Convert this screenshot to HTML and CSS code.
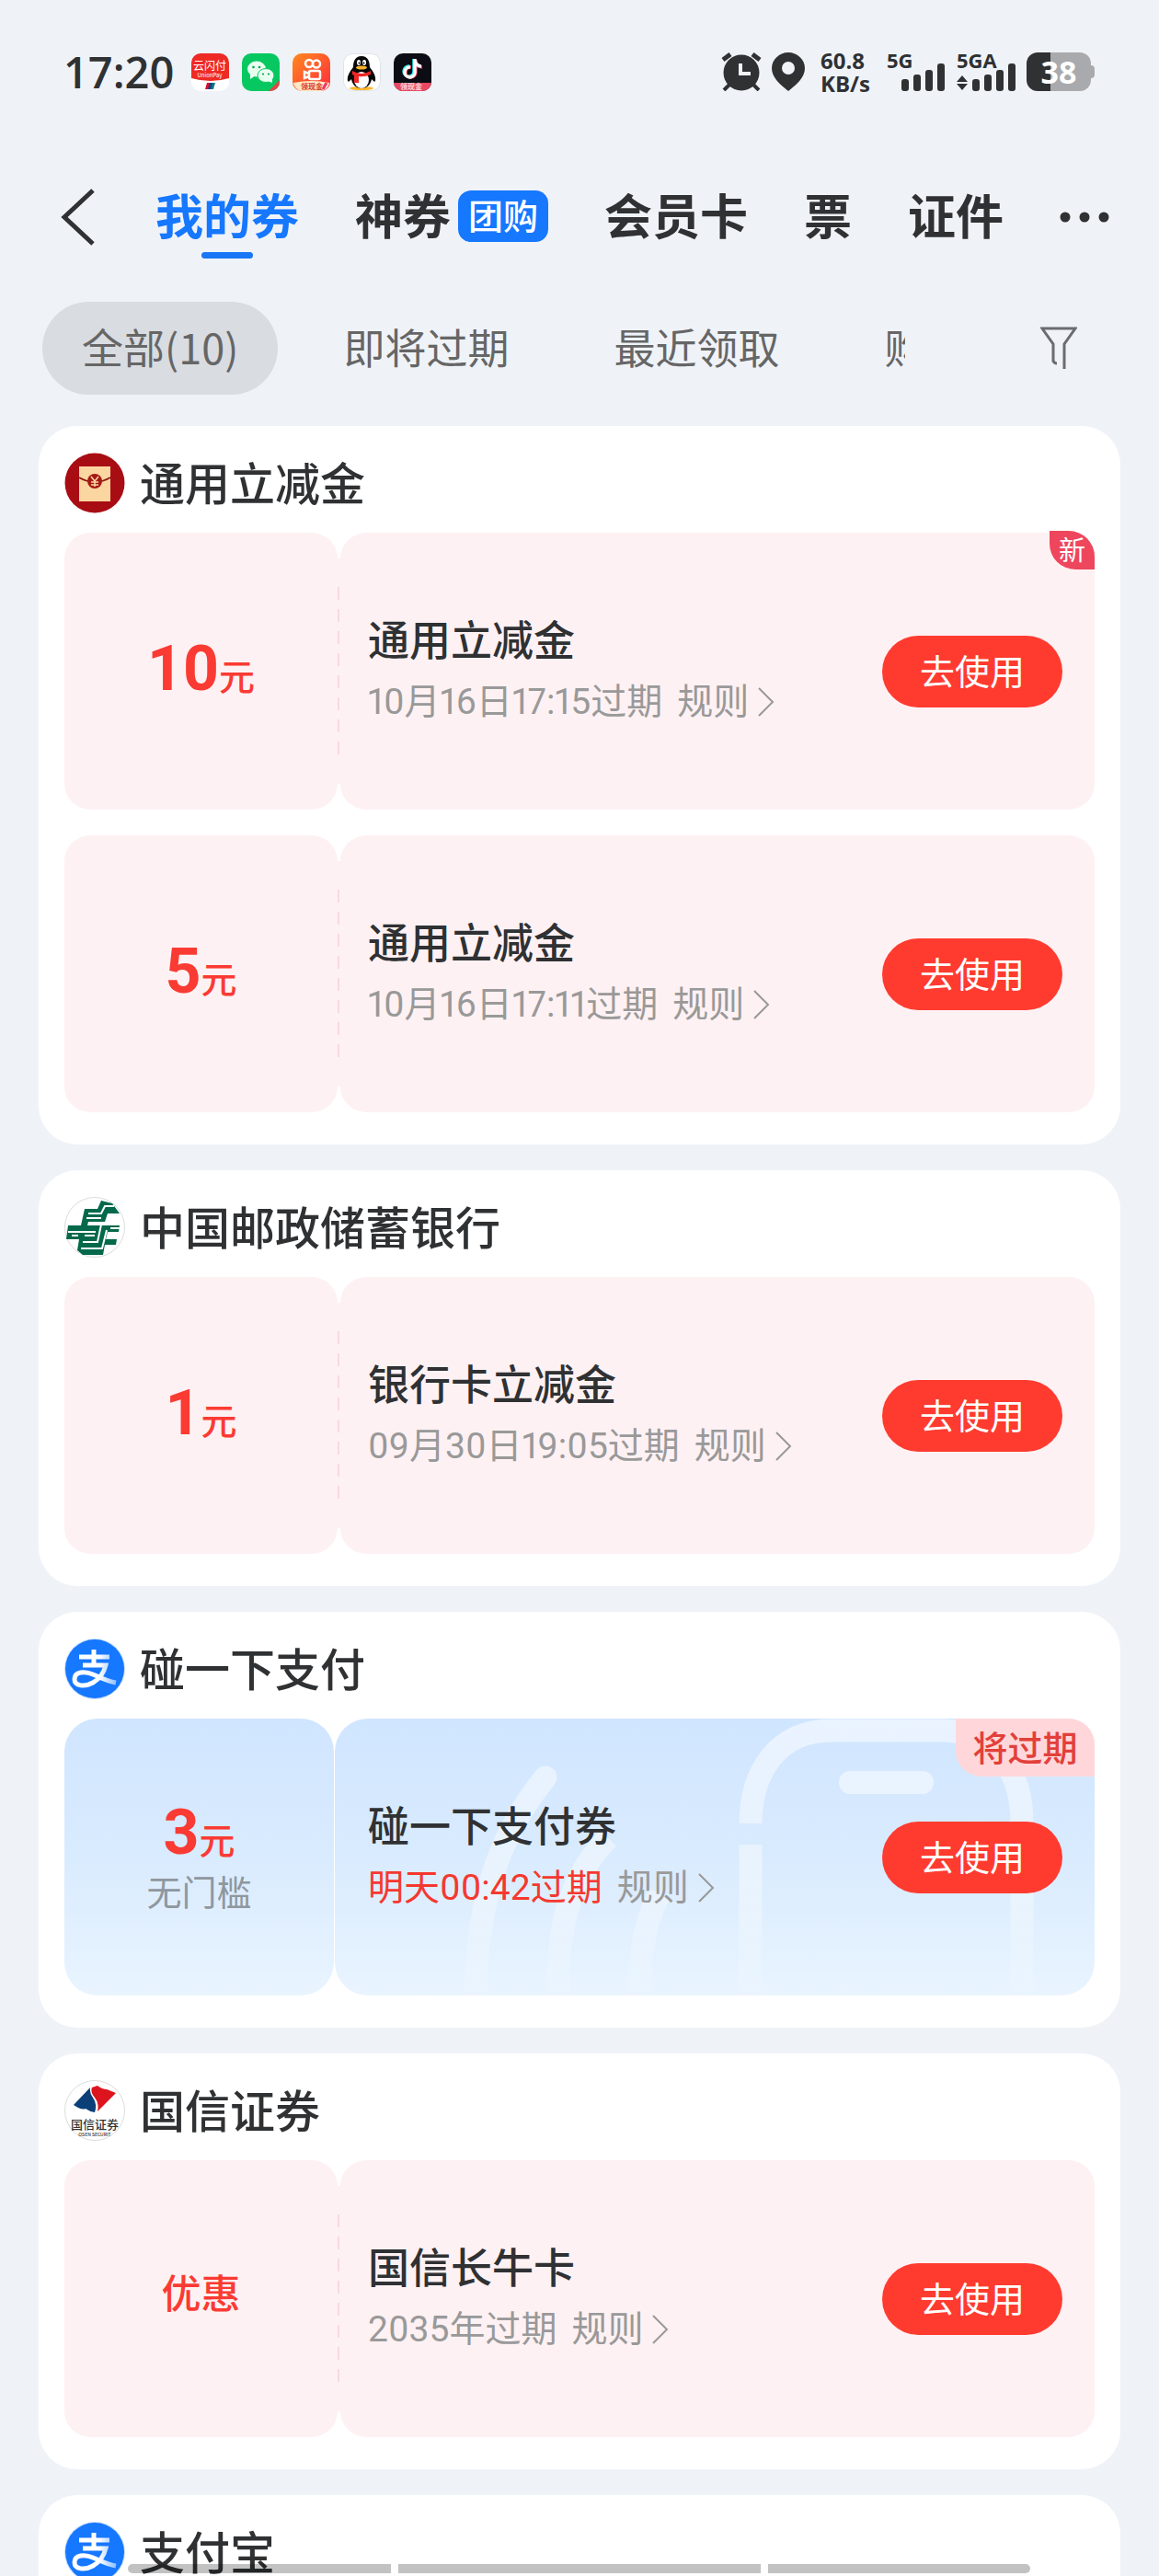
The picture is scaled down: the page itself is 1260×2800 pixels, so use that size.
FILE: index.html
```html
<!DOCTYPE html>
<html lang="zh-CN">
<head>
<meta charset="utf-8">
<meta name="viewport" content="width=device-width, initial-scale=1">
<title>我的券</title>
<link rel="stylesheet" href="styles.css">
</head>
<body>
<svg class="defs" aria-hidden="true">
  <defs>
    <linearGradient id="tail" x1="0" x2="1"><stop offset=".6" stop-color="#fff"/><stop offset="1" stop-color="#8fc0ff"/></linearGradient>
    <linearGradient id="fade" gradientUnits="userSpaceOnUse" x1="0" y1="0" x2="0" y2="301"><stop offset="0" stop-color="#fff" stop-opacity=".55"/><stop offset=".6" stop-color="#fff" stop-opacity=".38"/><stop offset="1" stop-color="#fff" stop-opacity=".08"/></linearGradient>
    <linearGradient id="ks" x1="0" y1="0" x2="1" y2="1"><stop offset="0" stop-color="#ff8a1e"/><stop offset="1" stop-color="#ff2b3c"/></linearGradient>
    <symbol id="alipay" viewBox="0 0 66 66">
      <circle cx="33" cy="33" r="33" fill="#c5defc"/>
      <circle cx="33" cy="33" r="32" fill="#1677ff"/>
      <path d="M16 20h33M32 12v17M20 29h25c-2 8-7 15-14 19-9 5-20 4-20-4 0-8 11-9 20-5 8 3 14 7 25 9" fill="none" stroke="url(#tail)" stroke-width="5"/>
    </symbol>
    <symbol id="chevron" viewBox="0 0 20 34"><path d="M2 2l15 15L2 32" fill="none" stroke="currentColor" stroke-width="2"/></symbol>
  </defs>
</svg>
<div class="app">
  <header class="status">
    <time class="clock">17:20</time>
    <div class="apps">
      <svg viewBox="0 0 41 41"><rect width="41" height="41" rx="10" fill="#fff"/><path d="M0 27V10A10 10 0 0 1 10 0h21a10 10 0 0 1 10 10v17q-20 6-41 0z" fill="#ee2a24"/><text x="20" y="18" text-anchor="middle" class="app-name">云闪付</text><text x="20" y="26" text-anchor="middle" class="app-sub">UnionPay</text><path d="M17 32h4l-2 7h-4z" fill="#d8102f"/><path d="M20 32h4l-2 7h-4z" fill="#16407f"/><path d="M23 32h3l-2 7h-3z" fill="#087a83"/></svg>
      <svg viewBox="0 0 41 41"><rect width="41" height="41" rx="10" fill="#07c860"/><path d="M29 41l12-12v2a10 10 0 0 1-10 10z" fill="#e54545"/><ellipse cx="16" cy="17" rx="10" ry="8.500" fill="#e8fff0"/><path d="M9 22v6l6-4z" fill="#e8fff0"/><ellipse cx="26" cy="24" rx="9" ry="7.500" fill="#e8fff0" stroke="#07c860"/><path d="M28 30l5 2v-4z" fill="#e8fff0"/><g fill="#07a04e"><circle cx="12.500" cy="15" r="1.300"/><circle cx="19" cy="15" r="1.300"/><circle cx="23" cy="22.500" r="1.100"/><circle cx="29" cy="22.500" r="1.100"/></g></svg>
      <svg viewBox="0 0 41 41"><rect width="41" height="41" rx="10" fill="url(#ks)"/><path d="M1 32q20-4 39 0a10 10 0 0 1-9 9H10a10 10 0 0 1-9-9z" fill="#ffe9c4"/><g fill="none" stroke="#fff" stroke-width="2.500"><circle cx="18" cy="11" r="4"/><circle cx="26" cy="11.500" r="4"/><rect x="18" y="19" width="12" height="9" rx="2"/><path d="M18 22l-5-2v7l5-2"/></g><text x="21" y="39" text-anchor="middle" class="app-promo">领现金</text><path d="M33 39l4-7" stroke="#f0356c" stroke-width="3"/></svg>
      <svg viewBox="0 0 41 41"><rect x=".5" y=".5" width="40" height="40" rx="10" fill="#fff" stroke="#dfe3e8"/><ellipse cx="20" cy="38" rx="13" ry="2" fill="#ffb52b"/><path d="M20 3c-7 0-9 6-9 12-4 5-7 10-6 15 1 2 3-1 4-2 1 6 5 10 11 10s10-4 11-10c1 1 3 4 4 2 1-5-2-10-6-15 0-6-2-12-9-12z" fill="#080808"/><ellipse cx="20" cy="29" rx="8" ry="9" fill="#fff"/><path d="M10 19q10 6 20 0v4q-7 3-13 2v7h-5v-8l-2-1z" fill="#f02626"/><ellipse cx="17" cy="10" rx="2" ry="3" fill="#fff"/><ellipse cx="23" cy="10" rx="2" ry="3" fill="#fff"/><circle cx="17.500" cy="10.500" r="1"/><circle cx="22.500" cy="10.500" r="1"/><ellipse cx="20" cy="15.500" rx="6" ry="2" fill="#ffb52b"/></svg>
      <svg viewBox="0 0 41 41"><rect width="41" height="41" rx="10" fill="#0b0c14"/><path d="M0 32h41a10 10 0 0 1-10 9H10A10 10 0 0 1 0 32z" fill="#e84862"/><g fill="none" stroke-width="3.500"><path d="M22 6v14a5.500 5.500 0 1 1-5-6M22 8q2 6 7 6" stroke="#25f4ee"/><path d="M24 7v14a5.500 5.500 0 1 1-5-6M24 9q2 6 7 6" stroke="#fe2c55"/><path d="M23 6v15a5.500 5.500 0 1 1-5-6M23 8q2 6 7 6" stroke="#fff"/></g><text x="19" y="39" text-anchor="middle" class="app-promo light">领现金</text></svg>
    </div>
    <div class="signals">
      <svg class="alarm" viewBox="0 0 44 42"><circle cx="22" cy="22" r="19.500" fill="#2f3133"/><path d="M2 8l8-6M42 8l-8-6" stroke="#2f3133" stroke-width="5"/><path d="M9 35l-6 6M35 35l6 6" stroke="#2f3133" stroke-width="4"/><path d="M21 12v11h11" fill="none" stroke="#eff3f8" stroke-width="4"/></svg>
      <svg class="pin" viewBox="0 0 36 42"><path d="M18 0C8 0 0 8 0 17c0 10 9 18 18 25 9-7 18-15 18-25C36 8 28 0 18 0z" fill="#2f3133"/><circle cx="18" cy="17" r="7" fill="#eff3f8"/></svg>
      <div class="speed"><span>60.8</span><span>KB/s</span></div>
      <div class="cell"><span>5G</span><svg viewBox="0 0 48 30"><g fill="#2f3133"><rect y="17" width="8" height="13" rx="3"/><rect x="13" y="12" width="8" height="18" rx="3"/><rect x="26" y="7" width="8" height="23" rx="3"/><rect x="39" width="8" height="30" rx="3"/></g></svg></div>
      <div class="cell"><span>5GA</span><svg class="wide" viewBox="0 0 64 30"><g fill="#2f3133"><path d="M6 13l6 7H0zM6 29l6-7H0z"/><rect x="17" y="17" width="8" height="13" rx="3"/><rect x="30" y="12" width="8" height="18" rx="3"/><rect x="43" y="7" width="8" height="23" rx="3"/><rect x="56" width="8" height="30" rx="3"/></g></svg></div>
      <div class="battery"><span>38</span></div>
    </div>
  </header>

  <nav class="tabs">
    <button class="back" aria-label="返回"><svg viewBox="0 0 38 62"><path d="M35 2L4 31l31 29" fill="none" stroke="#2f3133" stroke-width="5"/></svg></button>
    <a class="tab active" href="#mine">我的券</a>
    <a class="tab" href="#deals">神券<span class="tag">团购</span></a>
    <a class="tab" href="#cards">会员卡</a>
    <a class="tab" href="#tickets">票</a>
    <a class="tab" href="#ids">证件</a>
    <button class="more" aria-label="更多"><svg viewBox="0 0 54 12"><g fill="#2f3133"><circle cx="6" cy="6" r="5.500"/><circle cx="27" cy="6" r="5.500"/><circle cx="48" cy="6" r="5.500"/></g></svg></button>
  </nav>

  <div class="filters">
    <div class="filter-list">
      <button class="filter selected">全部(10)</button>
      <button class="filter">即将过期</button>
      <button class="filter">最近领取</button>
      <button class="filter">购物</button>
    </div>
    <button class="funnel" aria-label="筛选"><svg viewBox="0 0 40 48"><path d="M14 39.500V20L2 3h36L26 20v27M14 38q1 3 4 3" fill="none" stroke="#6a6c6f" stroke-width="3"/></svg></button>
  </div>

  <main class="list">
    <section class="card">
      <h2><svg class="logo" viewBox="0 0 66 66"><circle cx="33" cy="33" r="32.500" fill="#a80d14"/><rect x="16" y="15" width="34" height="38" fill="#fcd6a0"/><path d="M16 27q17 10 34 0" fill="none" stroke="#8a1510" stroke-width="2"/><circle cx="33" cy="31" r="8" fill="#a51a14"/><path d="M29 26l4 5 4-5M33 31v6M29 32h8M29 35h8" fill="none" stroke="#fcd6a0" stroke-width="1.500"/></svg><span>通用立减金</span></h2>
      <article class="coupon">
        <div class="value"><p class="amount"><b>10</b>元</p></div>
        <div class="body">
          <div class="info"><h3>通用立减金</h3><p class="meta">10月16日17:15过期 <a href="#rule">规则<svg><use href="#chevron"/></svg></a></p></div>
          <button class="use">去使用</button>
        </div>
        <span class="new">新</span>
      </article>
      <article class="coupon">
        <div class="value"><p class="amount"><b>5</b>元</p></div>
        <div class="body">
          <div class="info"><h3>通用立减金</h3><p class="meta">10月16日17:11过期 <a href="#rule">规则<svg><use href="#chevron"/></svg></a></p></div>
          <button class="use">去使用</button>
        </div>
      </article>
    </section>

    <section class="card">
      <h2><svg class="logo" viewBox="0 0 66 66"><circle cx="33" cy="33" r="32.500" fill="#fff" stroke="#dcdcdc"/><path d="M22 13H36L40 4L52 7L60 18H47L44 27H26L25 31H60L59 38H47L45 46H57L56 52H44L42 63H20L14 58L16 46H2L4 31H18z" fill="#04694a"/><path d="M26 18H40L44 10H54M24 23H40M4 38H34M22 42H33M8 42H15M40 30L36 49H20M46 36L41 56H18M60 34H50" fill="none" stroke="#fff" stroke-width="2"/></svg><span>中国邮政储蓄银行</span></h2>
      <article class="coupon">
        <div class="value"><p class="amount"><b>1</b>元</p></div>
        <div class="body">
          <div class="info"><h3>银行卡立减金</h3><p class="meta">09月30日19:05过期 <a href="#rule">规则<svg><use href="#chevron"/></svg></a></p></div>
          <button class="use">去使用</button>
        </div>
      </article>
    </section>

    <section class="card">
      <h2><svg class="logo"><use href="#alipay"/></svg><span>碰一下支付</span></h2>
      <article class="coupon blue">
        <div class="value"><p class="amount"><b>3</b>元</p><p class="limit">无门槛</p></div>
        <div class="body">
          <svg class="decor" viewBox="0 0 826 301"><g fill="none" stroke="url(#fade)" stroke-width="25"><path d="M452 114C452 60 480 13 540 13H660C720 13 747 60 747 114V301M452 137V301"/><path d="M229 64C185 118 155 185 153 301" stroke-linecap="round"/><path d="M297 130C262 165 241 215 243 301"/><path d="M353 190C338 220 331 250 331 301"/></g><rect x="548" y="57" width="103" height="25" rx="12" fill="#fff" fill-opacity=".5"/></svg>
          <div class="info"><h3>碰一下支付券</h3><p class="meta"><em>明天00:42过期</em> <a href="#rule">规则<svg><use href="#chevron"/></svg></a></p></div>
          <button class="use">去使用</button>
        </div>
        <span class="soon">将过期</span>
      </article>
    </section>

    <section class="card">
      <h2><svg class="logo" viewBox="0 0 66 66"><circle cx="33" cy="33" r="32.500" fill="#fff" stroke="#dcdcdc"/><path d="M10 27L28 8q-1 6 3 11 5 7 2 16-6-1-10-4-4 2-13-4z" fill="#0b3f78"/><path d="M30 8l6-2q5 4 10 4l10 4-20 20q2-9-3-15-5-6-3-11z" fill="#dd141d"/><text x="33" y="53" text-anchor="middle" class="logo-name">国信证券</text><text x="33" y="61" text-anchor="middle" class="logo-sub">OSEN SECURIT</text></svg><span>国信证券</span></h2>
      <article class="coupon">
        <div class="value"><p class="amount word">优惠</p></div>
        <div class="body">
          <div class="info"><h3>国信长牛卡</h3><p class="meta">2035年过期 <a href="#rule">规则<svg><use href="#chevron"/></svg></a></p></div>
          <button class="use">去使用</button>
        </div>
      </article>
    </section>

    <section class="card">
      <h2><svg class="logo"><use href="#alipay"/></svg><span>支付宝</span></h2>
    </section>
  </main>
  <div class="homebar"><i></i><i></i><i></i></div>
</div>
</body>
</html>
```
FILE: styles.css
```css
* { box-sizing: border-box; margin: 0; padding: 0; }
body {
  background: #eff3f8;
  color: #2f3133;
  font-family: "Noto Sans CJK SC", sans-serif;
}
button { border: 0; background: none; font: inherit; color: inherit; }
a { color: inherit; text-decoration: none; }
svg { display: block; flex: none; }
.defs { position: absolute; width: 0; height: 0; }
.app { height: 100vh; display: flex; flex-direction: column; overflow: hidden; position: relative; }

.status { display: flex; align-items: center; height: 156px; padding: 0 70px 0 69px; }
.clock { font: 600 47px/56px "Open Sans", sans-serif; width: 139px; white-space: nowrap; }
.apps { display: flex; gap: 14px; }
.apps svg { width: 41px; height: 41px; }
.app-name { font-size: 12px; fill: #fff; }
.app-sub { font-size: 6px; fill: #fff; }
.app-promo { font-size: 8px; font-weight: 700; fill: #d7322b; }
.app-promo.light { fill: #ffd9dd; }
.signals { display: flex; align-items: center; margin-left: auto; font-family: "Open Sans", sans-serif; font-weight: 700; }
.alarm { width: 44px; height: 42px; margin-right: 11px; }
.pin { width: 36px; height: 42px; margin-right: 17px; }
.speed { display: flex; flex-direction: column; width: 56px; margin-right: 16px; font-size: 24px; line-height: 25px; }
.cell { display: flex; flex-direction: column; height: 42px; margin-right: 12px; font-size: 22px; line-height: 16px; }
.cell svg { width: 48px; height: 30px; margin: -4px 0 0 16px; }
.cell svg.wide { width: 64px; margin-left: 0; }
.battery {
  position: relative; width: 70px; height: 42px; margin-right: 4px; border-radius: 12px;
  background: linear-gradient(90deg, #2f3133 26px, #a9aaad 26px);
  color: #fff; font-size: 34px; line-height: 42px; text-align: center;
}
.battery::after {
  content: ""; position: absolute; right: -4px; top: 14px; width: 4px; height: 14px;
  border-radius: 0 4px 4px 0; background: #a9aaad;
}

.tabs { display: flex; align-items: center; height: 160px; padding: 0 56px 0 66px; gap: 61px; }
.back { margin-right: 4px; }
.back svg { width: 38px; height: 62px; }
.tab {
  position: relative; display: flex; align-items: center; gap: 8px; padding-bottom: 6px;
  font-size: 52px; font-weight: 700; line-height: 60px; white-space: nowrap;
}
.tab.active { color: #1677ff; }
.tab.active::after {
  content: ""; position: absolute; left: 50%; bottom: -12px; width: 56px; height: 7px;
  margin-left: -28px; border-radius: 4px; background: #1b76f5;
}
.tag {
  height: 56px; margin-top: 4px; padding: 0 11px; border-radius: 14px; background: #1677ff; color: #fff;
  font-size: 38px; font-weight: 500; line-height: 52px;
}
.more { margin-left: auto; }
.more svg { width: 54px; height: 12px; }

.filters { display: flex; align-items: center; height: 124px; padding: 0 89px 0 46px; color: #666; }
.filter-list { display: flex; flex: 1; gap: 28px; overflow: hidden; }
.filter {
  flex: none; height: 101px; padding: 0 43px 3px; border-radius: 51px;
  font-size: 45px; line-height: 60px; white-space: nowrap;
}
.filter.selected { background: #d9dce1; }
.funnel { margin-left: 147px; }
.funnel svg { width: 40px; height: 48px; }

.list { flex: 1; min-height: 0; overflow: hidden; padding: 23px 42px 0; display: flex; flex-direction: column; gap: 28px; }
.card { flex: none; border-radius: 42px; background: #fff; padding: 0 28px 35px; }
.card h2 { display: flex; align-items: center; gap: 16px; height: 116px; padding-top: 8px; font-size: 49px; font-weight: 500; }
.card h2 span { padding-bottom: 6px; }
.logo { width: 66px; height: 66px; }
.logo-name { font-size: 13px; font-weight: 500; fill: #333; }
.logo-sub { font-size: 5px; fill: #333; }
.coupon { position: relative; display: grid; grid-template-columns: 297px 1fr; gap: 3px; min-height: 301px; }
.coupon + .coupon { margin-top: 28px; }
.coupon::before {
  content: ""; position: absolute; z-index: 1; left: 297px; top: 59px; width: 2px; height: 186px;
  background: repeating-linear-gradient(#f9d9df 0 14px, transparent 14px 24px);
}
.value, .body { border-radius: 28px; background: #fef1f3; }
.coupon:not(.blue) { background: linear-gradient(#fef1f3, #fef1f3) 290px 28px / 20px 245px no-repeat; }
.value { display: flex; flex-direction: column; align-items: center; justify-content: center; }
.amount { color: #fa3b33; font-size: 39px; font-weight: 500; line-height: 66px; }
.amount b { font: 700 68px/66px Roboto, sans-serif; }
.amount.word { padding-bottom: 18px; font-size: 43px; }
.limit { color: #8f979e; font-size: 38px; line-height: 48px; }
.body { position: relative; display: flex; align-items: center; justify-content: space-between; padding: 0 35px 0 30px; overflow: hidden; }
.info { position: relative; }
.info h3 { font-size: 45px; font-weight: 500; line-height: 61px; }
.meta { display: flex; gap: 16px; margin-top: 6px; color: #999; font: 39px/67px Roboto, "Noto Sans CJK SC", sans-serif; font-variant-numeric: proportional-nums; white-space: nowrap; }
.meta em { font-style: normal; color: #f5382f; }
.meta a { display: flex; align-items: center; gap: 9px; }
.meta svg { width: 20px; height: 34px; }
.use {
  position: relative; width: 196px; height: 78px; padding-bottom: 4px; border-radius: 39px; background: #ff3b30; color: #fff;
  font-size: 38px; line-height: 74px;
}
.new {
  position: absolute; right: 0; top: -2px; width: 49px; height: 42px; border-radius: 0 28px; background: #ee465c;
  color: #fff; font-size: 29px; line-height: 38px; text-align: center;
}
.blue { grid-template-columns: 293px 1fr; gap: 1px; }
.blue::before { display: none; }
.blue .value, .blue .body { border-radius: 36px; background: linear-gradient(#d0e5ff, #d9ebfe 50%, #e9f4ff); }
.blue .body { padding-left: 36px; }
.decor { position: absolute; inset: 0; width: 100%; height: 100%; }
.soon {
  position: absolute; right: 0; top: 0; width: 151px; height: 63px; border-radius: 0 28px; background: #ffd7da;
  color: #e2403a; font-size: 38px; font-weight: 500; line-height: 60px; text-align: center;
}

.homebar { position: absolute; left: 139px; right: 140px; bottom: 3px; display: grid; grid-template-columns: 286fr 395fr 285fr; gap: 8px; }
.homebar i { height: 10px; background: rgba(0, 0, 0, .24); }
.homebar i:first-child { border-radius: 5px 0 0 5px; }
.homebar i:last-child { border-radius: 0 5px 5px 0; }
```
